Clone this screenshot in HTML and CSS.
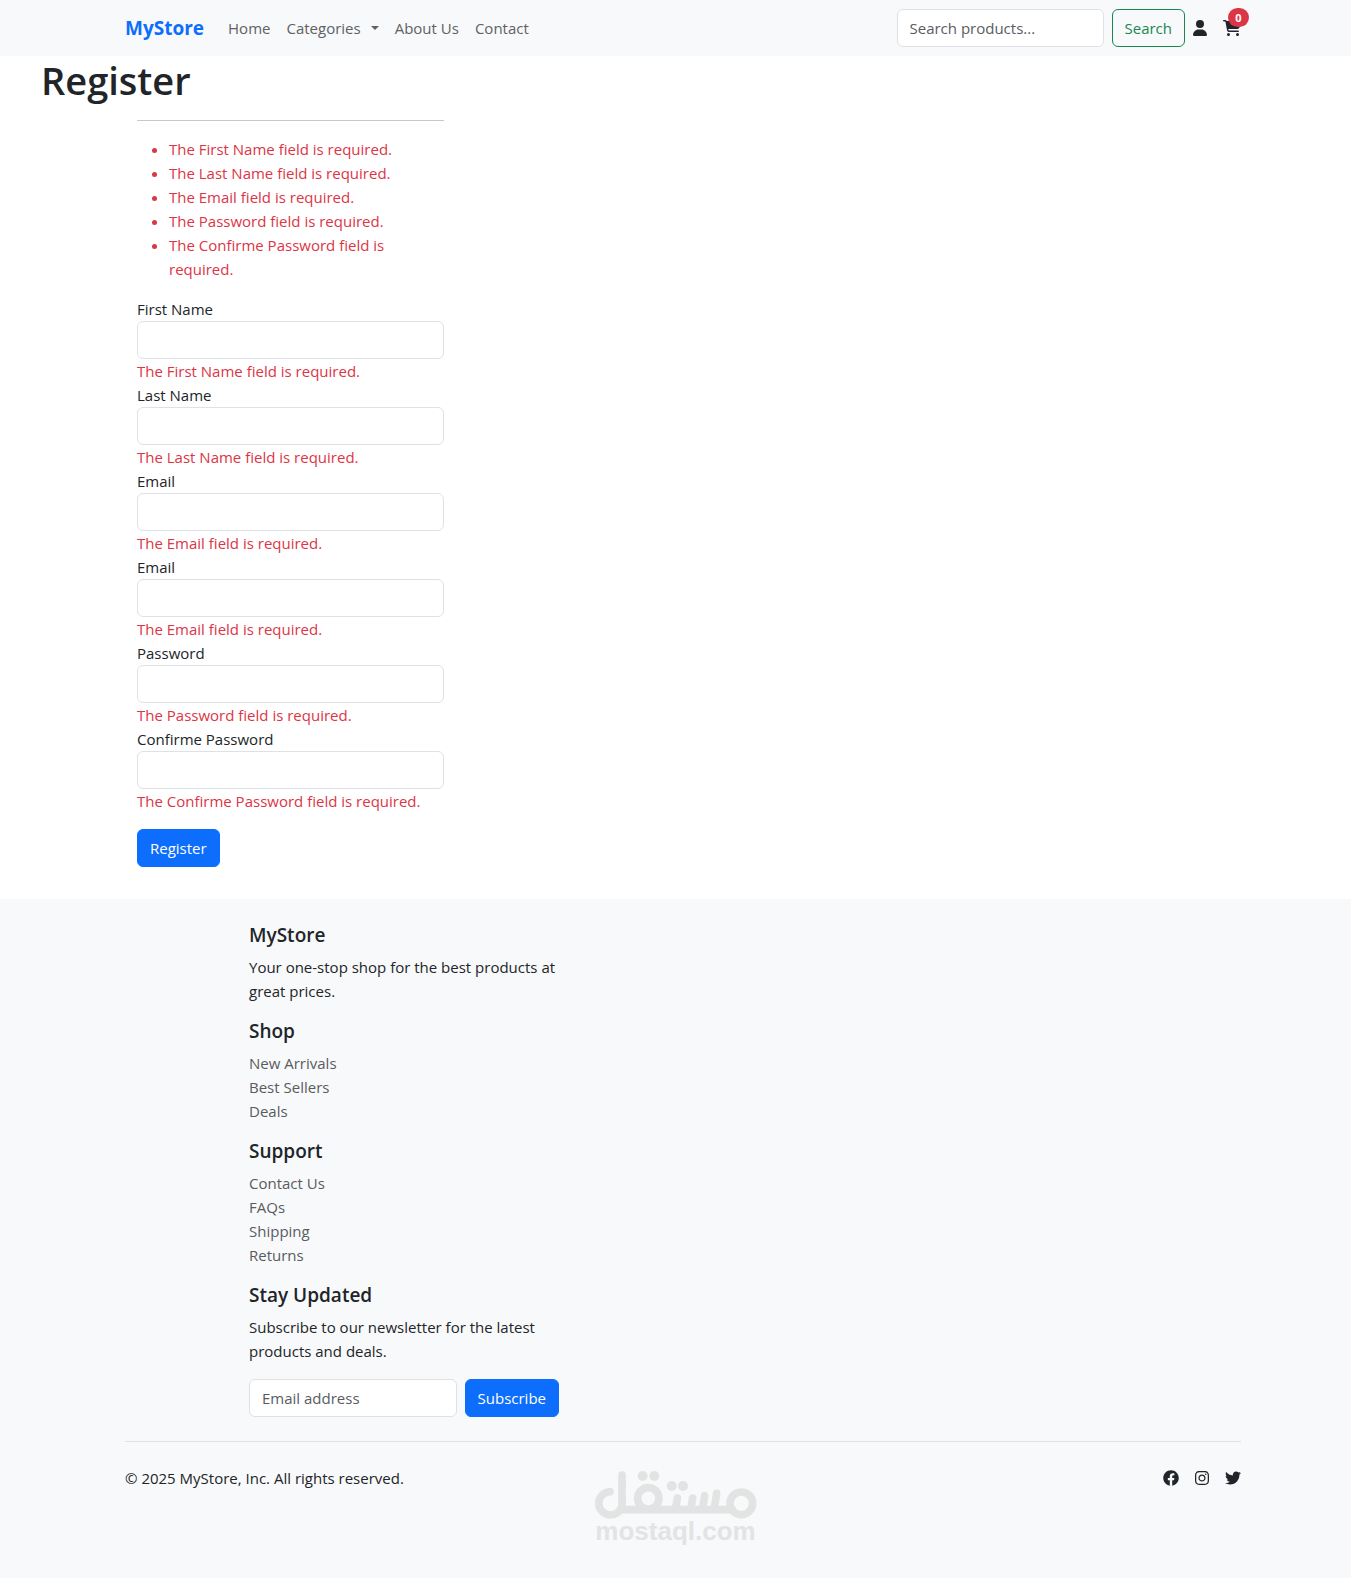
FILE: index.html
```
<!DOCTYPE html>
<html lang="en">
<head>
    <meta charset="UTF-8">
    <meta name="viewport" content="width=device-width, initial-scale=1.0">
    <title>Register - MyStore</title>
    <link rel="stylesheet" href="styles.css">
</head>
<body>
    <header class="navbar">
        <div class="container nav-inner">
            <a class="brand" href="#">MyStore</a>
            <nav class="nav-links">
                <a href="#">Home</a>
                <a class="dropdown" href="#">Categories</a>
                <a href="#">About Us</a>
                <a href="#">Contact</a>
            </nav>
            <form class="search">
                <input class="form-control" type="search" placeholder="Search products..." aria-label="Search products">
                <button class="btn btn-outline" type="submit">Search</button>
            </form>
            <div class="nav-icons">
                <a href="#" aria-label="Account">
                    <svg width="14" height="16" viewBox="0 0 448 512"><path d="M224 256A128 128 0 1 0 224 0a128 128 0 1 0 0 256zm-45.7 48C79.8 304 0 383.8 0 482.3C0 498.7 13.3 512 29.7 512H418.3c16.4 0 29.7-13.3 29.7-29.7C448 383.8 368.2 304 269.7 304H178.3z"/></svg>
                </a>
                <a class="cart" href="#" aria-label="Cart">
                    <svg width="18" height="16" viewBox="0 0 576 512"><path d="M0 24C0 10.7 10.7 0 24 0H69.5c22 0 41.5 12.8 50.6 32h411c26.3 0 45.5 25 38.6 50.4l-41 152.3c-8.5 31.4-37 53.3-69.5 53.3H170.7l5.4 28.5c2.2 11.3 12.1 19.5 23.6 19.5H488c13.3 0 24 10.7 24 24s-10.7 24-24 24H199.7c-34.6 0-64.3-24.6-70.7-58.5L77.4 54.5c-.7-3.8-4-6.5-7.9-6.5H24C10.7 48 0 37.3 0 24zM128 464a48 48 0 1 1 96 0 48 48 0 1 1 -96 0zm336-48a48 48 0 1 1 0 96 48 48 0 1 1 0-96z"/></svg>
                    <span class="badge">0</span>
                </a>
            </div>
        </div>
    </header>

    <main>
        <h1>Register</h1>
        <form class="register">
            <hr>
            <!-- validation summary -->
            <ul class="errors">
                <li>The First Name field is required.</li>
                <li>The Last Name field is required.</li>
                <li>The Email field is required.</li>
                <li>The Password field is required.</li>
                <li>The Confirme Password field is required.</li>
            </ul>
            <div class="field">
                <label for="firstName">First Name</label>
                <input class="form-control" type="text" id="firstName">
                <span class="error">The First Name field is required.</span>
            </div>
            <div class="field">
                <label for="lastName">Last Name</label>
                <input class="form-control" type="text" id="lastName">
                <span class="error">The Last Name field is required.</span>
            </div>
            <div class="field">
                <label for="email">Email</label>
                <input class="form-control" type="email" id="email">
                <span class="error">The Email field is required.</span>
            </div>
            <div class="field">
                <label for="email2">Email</label>
                <input class="form-control" type="email" id="email2">
                <span class="error">The Email field is required.</span>
            </div>
            <div class="field">
                <label for="password">Password</label>
                <input class="form-control" type="password" id="password">
                <span class="error">The Password field is required.</span>
            </div>
            <div class="field">
                <label for="confirm">Confirme Password</label>
                <input class="form-control" type="password" id="confirm">
                <span class="error">The Confirme Password field is required.</span>
            </div>
            <button class="btn btn-primary" type="submit">Register</button>
        </form>
    </main>

    <footer class="footer">
        <div class="container">
            <div class="footer-col">
                <h5>MyStore</h5>
                <p>Your one-stop shop for the best products at great prices.</p>
                <h5>Shop</h5>
                <ul>
                    <li><a href="#">New Arrivals</a></li>
                    <li><a href="#">Best Sellers</a></li>
                    <li><a href="#">Deals</a></li>
                </ul>
                <h5>Support</h5>
                <ul>
                    <li><a href="#">Contact Us</a></li>
                    <li><a href="#">FAQs</a></li>
                    <li><a href="#">Shipping</a></li>
                    <li><a href="#">Returns</a></li>
                </ul>
                <h5>Stay Updated</h5>
                <p>Subscribe to our newsletter for the latest products and deals.</p>
                <form class="newsletter">
                    <input class="form-control" type="email" placeholder="Email address" aria-label="Email address">
                    <button class="btn btn-primary" type="submit">Subscribe</button>
                </form>
            </div>
            <div class="footer-bottom">
                <p>© 2025 MyStore, Inc. All rights reserved.</p>
                <div class="social">
                    <a href="#" aria-label="Facebook">
                        <svg width="16" height="16" viewBox="0 0 512 512"><path d="M504 256C504 119 393 8 256 8S8 119 8 256c0 123.78 90.69 226.38 209.25 245V327.69h-63V256h63v-54.64c0-62.15 37-96.48 93.67-96.48 27.14 0 55.52 4.84 55.52 4.84v61h-31.28c-30.8 0-40.41 19.12-40.41 38.77V256h68.78l-11 71.69h-57.78V501C413.31 482.38 504 379.78 504 256z"/></svg>
                    </a>
                    <a href="#" aria-label="Instagram">
                        <svg width="14" height="16" viewBox="0 0 448 512"><path d="M224.1 141c-63.6 0-114.9 51.3-114.9 114.9s51.3 114.9 114.9 114.9S339 319.5 339 255.9 287.7 141 224.1 141zm0 189.6c-41.1 0-74.7-33.5-74.7-74.7s33.5-74.7 74.7-74.7 74.7 33.5 74.7 74.7-33.6 74.7-74.7 74.7zm146.4-194.3c0 14.9-12 26.8-26.8 26.8-14.9 0-26.8-12-26.8-26.8s12-26.8 26.8-26.8 26.8 12 26.8 26.8zm76.1 27.2c-1.7-35.9-9.9-67.7-36.2-93.9-26.2-26.2-58-34.4-93.9-36.2-37-2.1-147.9-2.1-184.9 0-35.8 1.7-67.6 9.9-93.9 36.1s-34.4 58-36.2 93.9c-2.1 37-2.1 147.9 0 184.9 1.7 35.9 9.9 67.7 36.2 93.9s58 34.4 93.9 36.2c37 2.1 147.9 2.1 184.9 0 35.9-1.7 67.7-9.9 93.9-36.2 26.2-26.2 34.4-58 36.2-93.9 2.1-37 2.1-147.8 0-184.8zM398.8 388c-7.8 19.6-22.9 34.7-42.6 42.6-29.5 11.7-99.5 9-132.1 9s-102.7 2.6-132.1-9c-19.6-7.8-34.7-22.9-42.6-42.6-11.7-29.5-9-99.5-9-132.1s-2.6-102.7 9-132.1c7.8-19.6 22.9-34.7 42.6-42.6 29.5-11.7 99.5-9 132.1-9s102.7-2.6 132.1 9c19.6 7.8 34.7 22.9 42.6 42.6 11.7 29.5 9 99.5 9 132.1s2.7 102.7-9 132.1z"/></svg>
                    </a>
                    <a href="#" aria-label="Twitter">
                        <svg width="16" height="16" viewBox="0 0 512 512"><path d="M459.37 151.716c.325 4.548.325 9.097.325 13.645 0 138.72-105.583 298.558-298.558 298.558-59.452 0-114.68-17.219-161.137-47.106 8.447.974 16.568 1.299 25.34 1.299 49.055 0 94.213-16.568 130.274-44.832-46.132-.975-84.792-31.188-98.112-72.772 6.498.974 12.995 1.624 19.818 1.624 9.421 0 18.843-1.3 27.614-3.573-48.081-9.747-84.143-51.98-84.143-102.985v-1.299c13.969 7.797 30.214 12.67 47.431 13.319-28.264-18.843-46.781-51.005-46.781-87.391 0-19.492 5.197-37.36 14.294-52.954 51.655 63.675 129.3 105.258 216.365 109.807-1.624-7.797-2.599-15.918-2.599-24.04 0-57.828 46.782-104.934 104.934-104.934 30.213 0 57.502 12.67 76.67 33.137 23.715-4.548 46.456-13.32 66.599-25.34-7.798 24.366-24.366 44.833-46.132 57.827 21.117-2.273 41.584-8.122 60.426-16.243-14.292 20.791-32.161 39.308-52.628 54.253z"/></svg>
                    </a>
                </div>
            </div>
        </div>
        <!-- site mark -->
        <div class="mark">
            <svg width="164" height="50" viewBox="100 90 492 150">
                <g fill="none" stroke="currentColor" stroke-width="23" stroke-linecap="round">
                    <path d="M148 155A35 35 0 1 0 184 196V105"/>
                    <circle cx="263" cy="175" r="32"/>
                    <circle cx="542" cy="190" r="34"/>
                    <path d="M184 209H515M350 174l-5 30M396 174l-5 30M432 167l-6 37M468 160l-7 44"/>
                </g>
                <g fill="currentColor">
                    <circle cx="246" cy="108" r="15"/>
                    <circle cx="281" cy="108" r="15"/>
                    <circle cx="333" cy="138" r="15"/>
                    <circle cx="367" cy="138" r="15"/>
                </g>
            </svg>
            <span>mostaql.com</span>
        </div>
    </footer>
</body>
</html>
```

FILE: styles.css
```
*{
    box-sizing: border-box;
}
body{
    margin: 0;
    font-family: "Segoe UI", "Open Sans", "Noto Sans", sans-serif;
    font-size: 15px;
    line-height: 24px;
    color: #212529;
    background-color: #fff;
}
h1,h5,p,ul{
    margin: 0;
    padding: 0;
}
a{
    color: inherit;
    text-decoration: none;
}
svg{
    display: block;
    fill: currentColor;
}
.container{
    max-width: 1140px;
    margin: 0 auto;
    padding: 0 12px;
}
/**表单控件**/
.form-control{
    display: block;
    width: 100%;
    height: 38px;
    padding: 6px 12px;
    border: 1px solid #dee2e6;
    border-radius: 6px;
    background-color: #fff;
    font: inherit;
    color: #212529;
}
.form-control::placeholder{
    color: #595c5f;
    opacity: 1;
}
.btn{
    height: 38px;
    padding: 6px 12px;
    border: 1px solid #0d6efd;
    border-radius: 6px;
    font: inherit;
    cursor: pointer;
}
.btn-primary{
    color: #fff;
    background-color: #0d6efd;
}
.btn-outline{
    color: #198754;
    border-color: #198754;
    background-color: transparent;
}
/**导航栏**/
.navbar{
    padding: 8px 0 8px 15px;
    background-color: #f8f9fa;
}
.nav-inner{
    display: flex;
    align-items: center;
    height: 40px;
}
.brand{
    margin-right: 16px;
    font-size: 19px;
    font-weight: 700;
    color: #0d6efd;
}
.nav-links{
    display: flex;
    flex: 1;
    color: #5e6265;
}
.nav-links a{
    padding: 8px;
}
.dropdown:after{
    content: '';
    display: inline-block;
    margin-left: 10px;
    border-top: 4px solid;
    border-left: 4px solid transparent;
    border-right: 4px solid transparent;
    vertical-align: 4px;
}
.search{
    display: flex;
    gap: 8px;
}
.search .form-control{
    width: 207px;
}
.nav-icons{
    display: flex;
    gap: 16px;
    margin-left: 8px;
}
.cart{
    position: relative;
}
.badge{
    position: absolute;
    top: -12px;
    left: 5px;
    width: 21px;
    height: 19px;
    border-radius: 10px;
    background-color: #dc3545;
    color: #fff;
    font-size: 11px;
    font-weight: 700;
    line-height: 19px;
    text-align: center;
}
/**注册表单**/
h1{
    padding-left: 41px;
    font-size: 38px;
    font-weight: 600;
    line-height: 48px;
}
.register{
    width: 307px;
    margin: 16px 0 32px 137px;
}
hr{
    height: 1px;
    margin: 0 0 16px;
    border: 0;
    background-color: #c7c8c9;
}
.errors{
    margin-bottom: 16px;
    padding-left: 32px;
    color: #dc3545;
}
.field label,.error{
    display: block;
}
.error{
    color: #dc3545;
}
.register .btn{
    margin-top: 16px;
}
/**页脚**/
.footer{
    position: relative;
    padding: 24px 0 88px 15px;
    background-color: #f8f9fa;
}
.footer-col{
    width: 310px;
    margin-left: 124px;
}
.footer h5{
    margin-bottom: 8px;
    font-size: 19px;
    font-weight: 600;
    line-height: 24px;
}
.footer-col p,.footer-col ul{
    margin-bottom: 16px;
    list-style: none;
}
.footer-col ul{
    color: #595c5f;
}
.newsletter{
    display: flex;
    gap: 8px;
}
.newsletter .form-control{
    flex: 1;
    min-width: 0;
}
.footer-bottom{
    display: flex;
    justify-content: space-between;
    align-items: center;
    margin-top: 24px;
    padding-top: 24px;
    border-top: 1px solid #dee2e6;
}
.social{
    display: flex;
    gap: 16px;
}
.mark{
    position: absolute;
    left: 0;
    right: 0;
    bottom: 36px;
    display: flex;
    flex-direction: column;
    align-items: center;
    font-family: "Liberation Sans", Arial, sans-serif;
    font-size: 26px;
    font-weight: 700;
    line-height: 22px;
    color: #e2e4e4;
    pointer-events: none;
}
```
